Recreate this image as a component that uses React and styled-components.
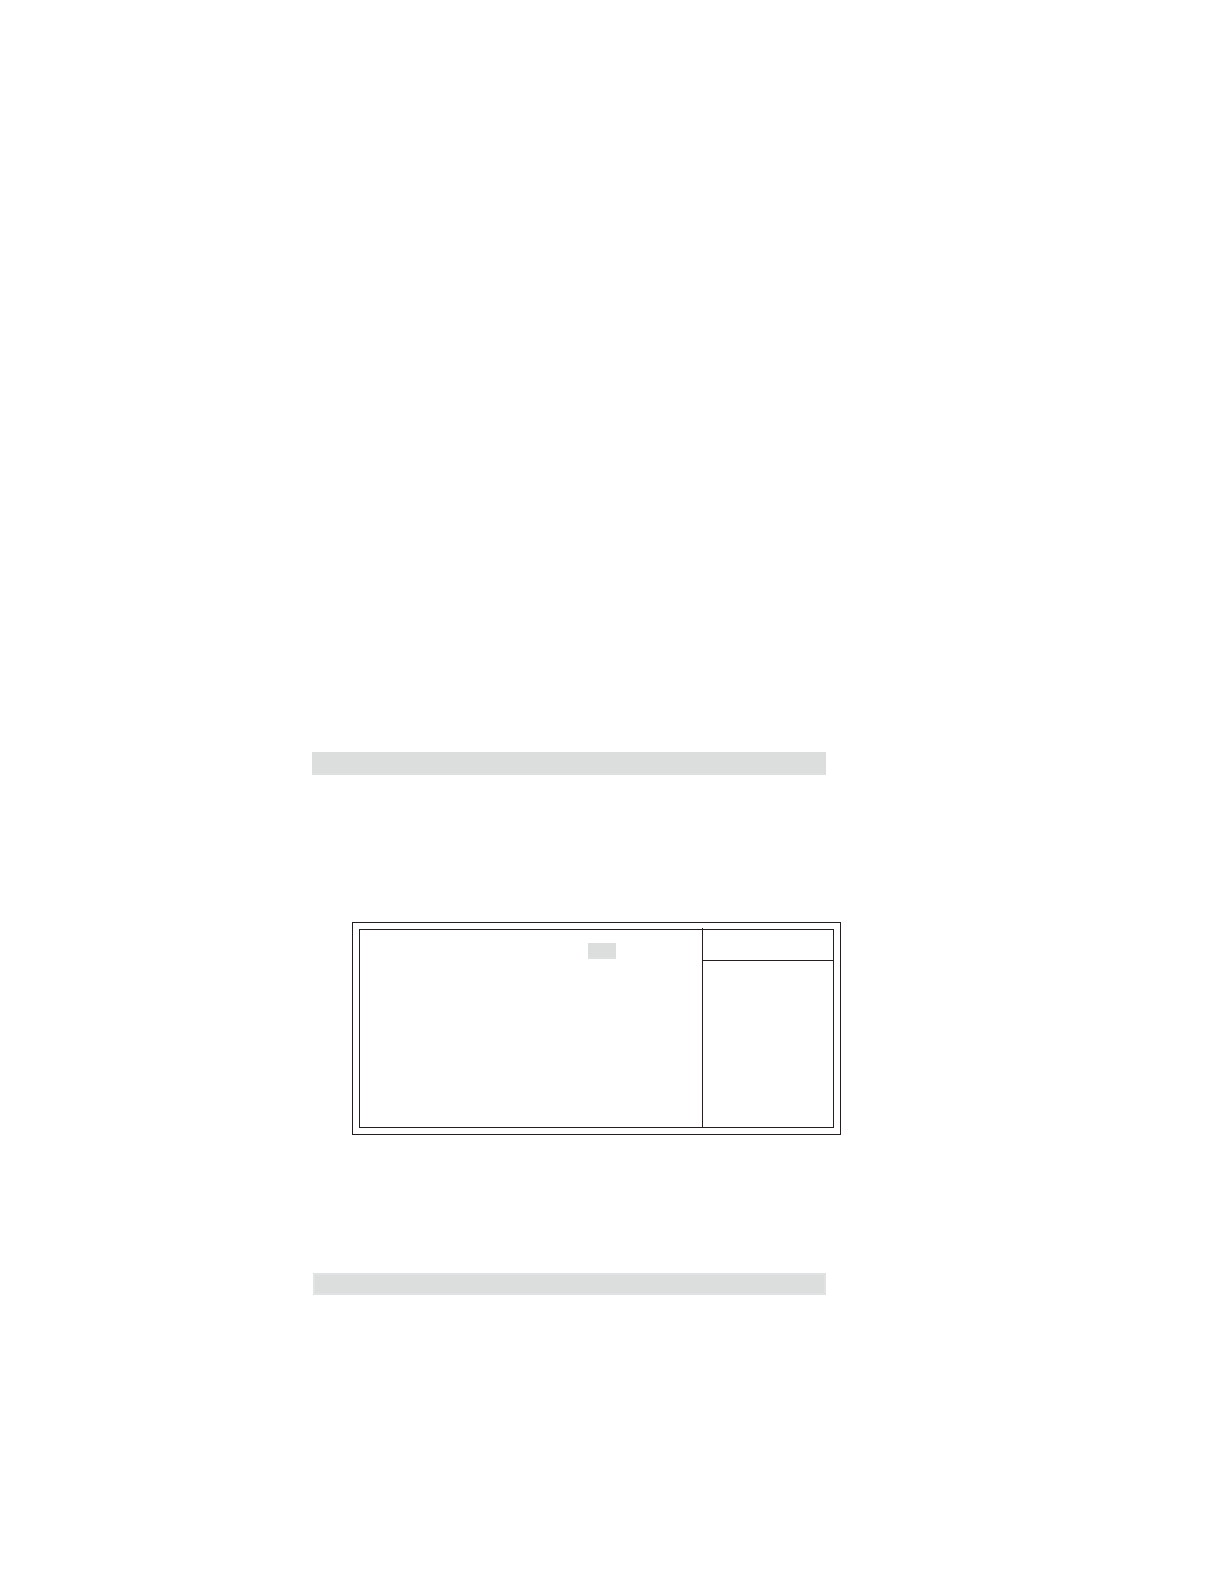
import styled, { createGlobalStyle } from "styled-components";
import React from "react";

const App = () => {
  return (
    <>
      <GlobalStyle />
      <Page>
        <Band />
        <Frame>
          <Screen>
            <Options>
              <Selected />
            </Options>
            <Help>
              <HelpHeader />
            </Help>
          </Screen>
        </Frame>
        <Band outlined />
      </Page>
    </>
  );
};

const GlobalStyle = createGlobalStyle`
  * {
    box-sizing: border-box;
  }
  body {
    margin: 0;
    background: #ffffff;
    font-family: "Liberation Sans", Arial, sans-serif;
  }
`;

const Page = styled.main`
  display: flex;
  flex-direction: column;
  min-height: 100vh;
  padding: 752px 383px 48px 312px;
`;

const Band = styled.div.withConfig({
  shouldForwardProp: (prop) => prop !== "outlined",
})`
  height: ${(props) => (props.outlined ? "22px" : "23px")};
  margin-right: 15px;
  margin-left: ${(props) => (props.outlined ? "1px" : "0")};
  background: #dcdddd;
  border: 0 solid;
  border-width: ${(props) => (props.outlined ? "2px" : "0 0 2px")};
  border-color: ${(props) => (props.outlined ? "#e1e2e3" : "#dedfdf")};
`;

const Frame = styled.section`
  margin: 147px 0 138px 40px;
  padding: 6px;
  border: 1px solid #231f20;
`;

const Screen = styled.div`
  display: grid;
  grid-template-columns: 1fr 131px;
  min-height: 199px;
  border: 1px solid #231f20;
`;

const Options = styled.div`
  display: flex;
  justify-content: flex-end;
  padding: 13px 86px 13px 0;
`;

const Selected = styled.div`
  width: 28px;
  height: 16px;
  background: #dcdddd;
  border-bottom: 2px solid #dedfdf;
`;

/* the divider runs up across the top border */
const Help = styled.aside`
  margin-top: -2px;
  border-left: 1px solid #231f20;
`;

const HelpHeader = styled.header`
  height: 33px;
  border-bottom: 1px solid #231f20;
`;

export default App;
